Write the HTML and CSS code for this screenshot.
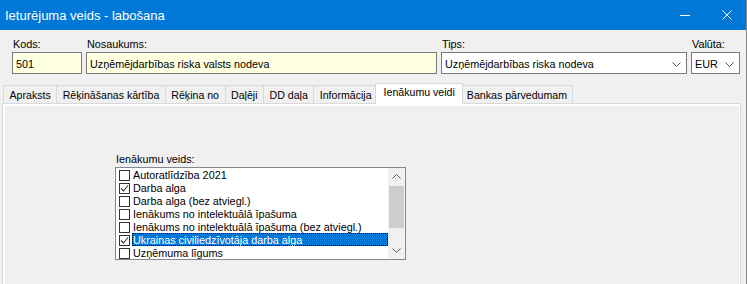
FILE: index.html
```html
<!DOCTYPE html>
<html lang="lv">
<head>
  <meta charset="UTF-8">
  <title>Ieturējuma veids - labošana</title>
  <link rel="stylesheet" href="styles.css">
</head>
<body>
<div class="window">

  <!-- title bar -->
  <div class="titlebar">
    <span class="title">Ieturējuma veids - labošana</span>
    <span class="tb-btn tb-min">
      <svg width="10" height="10" viewBox="0 0 10 10"><path d="M0 5.5H10" stroke="#fff" stroke-width="1"/></svg>
    </span>
    <span class="tb-btn tb-close">
      <svg width="10" height="10" viewBox="0 0 10 10"><path d="M0.5 0.5L9.5 9.5M9.5 0.5L0.5 9.5" stroke="#fff" stroke-width="1"/></svg>
    </span>
  </div>

  <div class="client">

    <!-- header fields -->
    <div class="fields">
      <div class="field">
        <label>Kods:</label>
        <div class="edit edit-req">501</div>
      </div>
      <div class="field">
        <label>Nosaukums:</label>
        <div class="edit edit-req">Uzņēmējdarbības riska valsts nodeva</div>
      </div>
      <div class="field">
        <label>Tips:</label>
        <div class="edit combo">
          <span>Uzņēmējdarbības riska nodeva</span>
          <svg class="chev" width="9" height="5" viewBox="0 0 9 5"><path d="M0.5 0.5L4.5 4.5L8.5 0.5" fill="none" stroke="#505050"/></svg>
        </div>
      </div>
      <div class="field">
        <label>Valūta:</label>
        <div class="edit combo">
          <span>EUR</span>
          <svg class="chev" width="9" height="5" viewBox="0 0 9 5"><path d="M0.5 0.5L4.5 4.5L8.5 0.5" fill="none" stroke="#505050"/></svg>
        </div>
      </div>
    </div>

    <!-- tabs -->
    <div class="tabs">
      <div class="tab">Apraksts</div>
      <div class="tab">Rēķināšanas kārtība</div>
      <div class="tab">Rēķina no</div>
      <div class="tab">Daļēji</div>
      <div class="tab">DD daļa</div>
      <div class="tab">Informācija</div>
      <div class="tab active">Ienākumu veidi</div>
      <div class="tab">Bankas pārvedumam</div>
    </div>

    <div class="page">
      <label class="list-label">Ienākumu veids:</label>
      <div class="checklist">
        <div class="items">
          <div class="row"><span class="cb"></span><span class="txt">Autoratlīdzība 2021</span></div>
          <div class="row"><span class="cb checked"><svg width="9" height="9" viewBox="0 0 9 9"><path d="M1 4.5L3.5 7L8 1.5" fill="none" stroke="#333" stroke-width="1.1"/></svg></span><span class="txt">Darba alga</span></div>
          <div class="row"><span class="cb"></span><span class="txt">Darba alga (bez atviegl.)</span></div>
          <div class="row"><span class="cb"></span><span class="txt">Ienākums no intelektuālā īpašuma</span></div>
          <div class="row"><span class="cb"></span><span class="txt">Ienākums no intelektuālā īpašuma (bez atviegl.)</span></div>
          <div class="row selected"><span class="cb checked"><svg width="9" height="9" viewBox="0 0 9 9"><path d="M1 4.5L3.5 7L8 1.5" fill="none" stroke="#333" stroke-width="1.1"/></svg></span><span class="txt">Ukrainas civiliedzīvotāja darba alga</span></div>
          <div class="row"><span class="cb"></span><span class="txt">Uzņēmuma līgums</span></div>
        </div>
        <div class="vscroll">
          <div class="sb-btn"><svg width="9" height="5" viewBox="0 0 9 5"><path d="M0.5 4.5L4.5 0.5L8.5 4.5" fill="none" stroke="#606060"/></svg></div>
          <div class="sb-track"><div class="sb-thumb"></div></div>
          <div class="sb-btn"><svg width="9" height="5" viewBox="0 0 9 5"><path d="M0.5 0.5L4.5 4.5L8.5 0.5" fill="none" stroke="#606060"/></svg></div>
        </div>
      </div>
    </div>

  </div>
</div>
</body>
</html>
```

FILE: styles.css
```css
body { margin: 0; background: #fff; font-family: "Liberation Sans", Arial, sans-serif; font-size: 10.8px; color: #000; }
.window { width: 746px; height: 284px; border-right: 1px solid #8a8a8a; background: #f0f0f0; overflow: hidden; }

/* title bar */
.titlebar { height: 30px; background: #0078d7; color: #fff; display: flex; align-items: center; }
.title { flex: 1; padding-left: 5px; font-size: 13px; line-height: 30px; padding-top: 1px; }
.tb-btn { height: 30px; display: flex; align-items: center; justify-content: center; }
.tb-min { width: 46px; }
.tb-close { width: 38px; }

/* fields */
.fields { display: grid; grid-template-columns: 70px 351px 246px 49px; column-gap: 4px; padding: 7px 0 0 12px; }
.field label { display: block; line-height: 14px; padding-left: 1px; margin-bottom: 1px; }
.edit { height: 22px; box-sizing: border-box; border: 1px solid #7a7a7a; background: #fff; padding: 2px 3px 0; line-height: 18px; white-space: nowrap; overflow: hidden; }
.edit-req { background: #ffffe1; }
.combo { display: flex; align-items: flex-start; justify-content: space-between; padding-right: 5px; }
.combo .chev { margin-top: 7px; }

/* tabs */
.tabs { display: flex; align-items: flex-end; height: 20px; margin: 9px 0 0 3px; }
.tab { height: 18px; box-sizing: border-box; border: 1px solid #d9d9d9; border-bottom: none; margin-left: -1px; padding: 0 5.5px; line-height: 17px; padding-top: 1px; background: #f0f0f0; white-space: nowrap; font-size: 10.6px; }
.tab:first-child { margin-left: 0; }
.tab.active { position: relative; z-index: 1; height: 21px; margin: 0 -2px -1px -3px; padding: 0 7.5px; line-height: 16px; background: #fff; }

/* tab page */
.page { margin-left: 2px; width: 739px; height: 200px; box-sizing: border-box; border: 1px solid #d9d9d9; box-shadow: inset 2px 2px 0 #fff, inset -1px 0 0 #fff; padding: 48px 0 0 112px; }
.list-label { display: block; line-height: 14px; padding-left: 1px; margin-bottom: 1px; }

.checklist { width: 291px; height: 93px; box-sizing: border-box; border: 1px solid #828790; background: #fff; display: flex; }
.items { flex: 1; overflow: hidden; }
.row { height: 13px; display: flex; align-items: flex-start; }
.cb { width: 11px; height: 11px; box-sizing: border-box; border: 1px solid #333; background: #fff; margin: 2px 0 0 3px; flex: none; display: flex; align-items: center; justify-content: center; }
.txt { flex: 1; margin-left: 2px; padding-left: 1px; line-height: 13px; height: 13px; box-sizing: border-box; padding-top: 1px; white-space: nowrap; }
.row.selected .txt { background: #0078d7; color: #fff; outline: 1px dotted #000; outline-offset: -1px; }

.vscroll { width: 17px; background: #f0f0f0; display: flex; flex-direction: column; }
.sb-btn { height: 17px; display: flex; align-items: center; justify-content: center; }
.sb-track { flex: 1; padding: 1px 1px 0; }
.sb-thumb { height: 42px; background: #cdcdcd; }
```
